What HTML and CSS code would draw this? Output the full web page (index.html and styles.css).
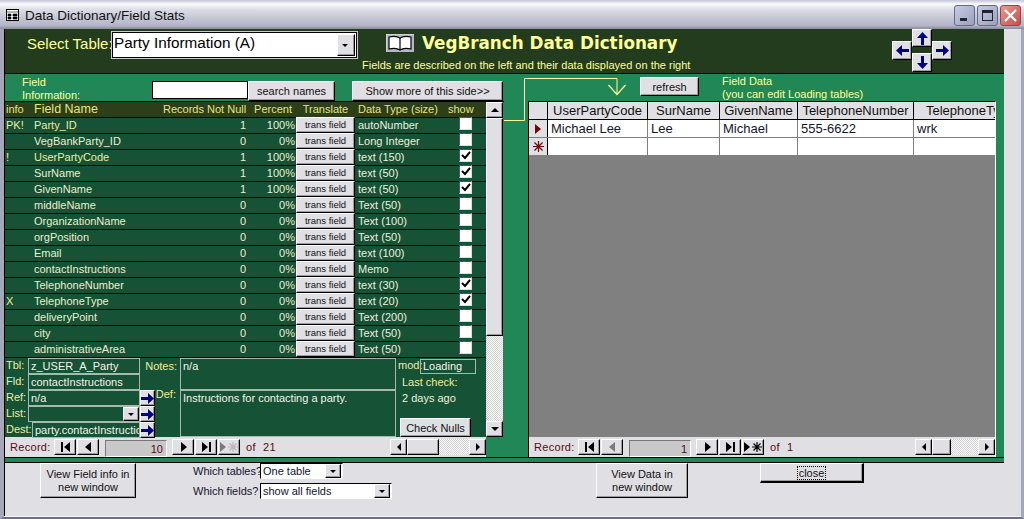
FILE: index.html
```html
<!DOCTYPE html>
<html lang="en">
<head>
    <meta charset="UTF-8">
    <meta name="viewport" content="width=device-width, initial-scale=1.0">
    <title>Data Dictionary/Field Stats</title>
    <link rel="stylesheet" href="styles.css">
</head>
<body>
    <svg class="sprite" width="0" height="0">
        <symbol id="blueRight" viewBox="0 0 13 11"><path d="M0 4h7V0l6 5.5-6 5.500V7H0z" fill="#000080"/></symbol>
        <symbol id="blueLeft" viewBox="0 0 13 11"><path d="M13 4H6V0L0 5.500l6 5.500V7h7z" fill="#000080"/></symbol>
        <symbol id="blueUp" viewBox="0 0 11 13"><path d="M4 13V6H0l5.500-6 5.500 6H7v7z" fill="#000080"/></symbol>
        <symbol id="blueDown" viewBox="0 0 11 13"><path d="M4 0v7H0l5.500 6 5.500-6H7V0z" fill="#000080"/></symbol>
        <symbol id="navFirst" viewBox="0 0 11 10"><path d="M1 0h2v10H1zM10 0v10L4 5z"/></symbol>
        <symbol id="navPrev" viewBox="0 0 11 10"><path d="M8 0v10L2 5z"/></symbol>
        <symbol id="navNext" viewBox="0 0 11 10"><path d="M3 0v10l6-5z"/></symbol>
        <symbol id="navLast" viewBox="0 0 11 10"><path d="M1 0v10l6-5zM8 0h2v10H8z"/></symbol>
        <symbol id="navNew" viewBox="0 0 20 10"><path d="M1 0v10l6-5z"/><path d="M14 0v10M9 5h10M10.500 1.500l7 7M17.500 1.500l-7 7" stroke="currentColor" stroke-width="1.200" fill="none"/></symbol>
        <symbol id="newStar" viewBox="0 0 11 11"><path d="M5.500 0v11M0 5.500h11M1.500 1.500l8 8M9.500 1.500l-8 8" stroke="#6a0a0a" stroke-width="1.200" fill="none"/></symbol>
        <symbol id="tick" viewBox="0 0 10 9"><path d="M1 4l3 3 5-6" fill="none" stroke="#000" stroke-width="2"/></symbol>
    </svg>

    <div class="window">
        <div class="titlebar">
            <svg class="title-icon" viewBox="0 0 13 12"><rect x=".5" y=".5" width="12" height="11" fill="#fff" stroke="#000"/><path d="M0 3h13M2 5h3v2H2zM7 5h4v2H7zM2 8h3v2H2zM7 8h4v2H7z" fill="#000" stroke="#000" stroke-width=".6"/></svg>
            <span class="title-text">Data Dictionary/Field Stats</span>
            <div class="win-buttons">
                <div class="win-btn"><span class="win-min"></span></div>
                <div class="win-btn"><span class="win-max"></span></div>
                <div class="win-btn win-close">
                    <svg viewBox="0 0 13 13" width="13" height="13"><path d="M1 1l11 11M12 1L1 12" stroke="#fff" stroke-width="2.200"/></svg>
                </div>
            </div>
        </div>

        <div class="client">
            <div class="form">
                <div class="form-head">
                    <span class="select-label">Select Table:</span>
                    <div class="combo combo-table">
                        <span class="combo-text">Party Information (A)</span>
                        <span class="combo-btn"></span>
                    </div>
                    <div class="head-title">
                        <div class="head-line">
                            <svg class="book" viewBox="0 0 28 18">
                                <rect width="28" height="18" fill="#b4b8c4"/>
                                <path d="M0 0h28M0 0v18" stroke="#e8e8f0" fill="none"/>
                                <path d="M3 3c4-1 8-1 11 1 3-2 7-2 11-1v12c-4-1-8-1-11 1-3-2-7-2-11-1z" fill="#fff" stroke="#000" stroke-width="1.200"/>
                                <path d="M14 4v12" stroke="#000" stroke-width="1.200"/>
                            </svg>
                            <h1 class="app-title">VegBranch Data Dictionary</h1>
                        </div>
                        <p class="head-sub">Fields are described on the left and their data displayed on the right</p>
                    </div>
                    <div class="arrow-pad">
                        <div class="pad-btn pad-up"><svg width="11" height="13"><use href="#blueUp"/></svg></div>
                        <div class="pad-btn pad-left"><svg width="13" height="11"><use href="#blueLeft"/></svg></div>
                        <div class="pad-btn pad-right"><svg width="13" height="11"><use href="#blueRight"/></svg></div>
                        <div class="pad-btn pad-down"><svg width="11" height="13"><use href="#blueDown"/></svg></div>
                    </div>
                </div>

                <div class="form-body">
                    <svg class="connector" width="130" height="50" viewBox="0 0 130 50">
                        <path d="M0 46.500h20.500V4.500h92.500V20" fill="none" stroke="#ffff99"/>
                        <path d="M104.500 11l8.500 9.500 8.500-9.500" fill="none" stroke="#ffff99" stroke-width="1.300"/>
                    </svg>

                    <section class="left-panel">
                        <div class="left-top">
                            <div class="field-info">Field<br>Information:</div>
                            <input class="search-box" type="text">
                            <button class="btn btn-search">search names</button>
                            <button class="btn btn-more">Show more of this side&gt;&gt;</button>
                        </div>

                        <div class="left-box">
                            <div class="left-main">
                                <div class="row row-head">
                                    <span>info</span>
                                    <span class="head-name">Field Name</span>
                                    <span class="num">Records Not Null</span>
                                    <span class="num">Percent</span>
                                    <span class="center">Translate</span>
                                    <span class="type">Data Type (size)</span>
                                    <span class="head-show">show</span>
                                </div>
                                <div class="row"><span class="mark">PK!</span><span class="hot">Party_ID</span><span class="num">1</span><span class="num">100%</span><button class="btn trans">trans field</button><span class="type">autoNumber</span><span class="check"></span></div>
                                <div class="row"><span class="mark"></span><span>VegBankParty_ID</span><span class="num">0</span><span class="num">0%</span><button class="btn trans">trans field</button><span class="type">Long Integer</span><span class="check"></span></div>
                                <div class="row"><span class="mark">!</span><span class="hot">UserPartyCode</span><span class="num">1</span><span class="num">100%</span><button class="btn trans">trans field</button><span class="type">text (150)</span><span class="check"><svg width="10" height="9"><use href="#tick"/></svg></span></div>
                                <div class="row"><span class="mark"></span><span>SurName</span><span class="num">1</span><span class="num">100%</span><button class="btn trans">trans field</button><span class="type">text (50)</span><span class="check"><svg width="10" height="9"><use href="#tick"/></svg></span></div>
                                <div class="row"><span class="mark"></span><span>GivenName</span><span class="num">1</span><span class="num">100%</span><button class="btn trans">trans field</button><span class="type">text (50)</span><span class="check"><svg width="10" height="9"><use href="#tick"/></svg></span></div>
                                <div class="row"><span class="mark"></span><span>middleName</span><span class="num">0</span><span class="num">0%</span><button class="btn trans">trans field</button><span class="type">Text (50)</span><span class="check"></span></div>
                                <div class="row"><span class="mark"></span><span>OrganizationName</span><span class="num">0</span><span class="num">0%</span><button class="btn trans">trans field</button><span class="type">Text (100)</span><span class="check"></span></div>
                                <div class="row"><span class="mark"></span><span>orgPosition</span><span class="num">0</span><span class="num">0%</span><button class="btn trans">trans field</button><span class="type">Text (50)</span><span class="check"></span></div>
                                <div class="row"><span class="mark"></span><span>Email</span><span class="num">0</span><span class="num">0%</span><button class="btn trans">trans field</button><span class="type">text (100)</span><span class="check"></span></div>
                                <div class="row"><span class="mark"></span><span>contactInstructions</span><span class="num">0</span><span class="num">0%</span><button class="btn trans">trans field</button><span class="type">Memo</span><span class="check"></span></div>
                                <div class="row"><span class="mark"></span><span>TelephoneNumber</span><span class="num">0</span><span class="num">0%</span><button class="btn trans">trans field</button><span class="type">text (30)</span><span class="check"><svg width="10" height="9"><use href="#tick"/></svg></span></div>
                                <div class="row"><span class="mark">X</span><span>TelephoneType</span><span class="num">0</span><span class="num">0%</span><button class="btn trans">trans field</button><span class="type">text (20)</span><span class="check"><svg width="10" height="9"><use href="#tick"/></svg></span></div>
                                <div class="row"><span class="mark"></span><span>deliveryPoint</span><span class="num">0</span><span class="num">0%</span><button class="btn trans">trans field</button><span class="type">Text (200)</span><span class="check"></span></div>
                                <div class="row"><span class="mark"></span><span>city</span><span class="num">0</span><span class="num">0%</span><button class="btn trans">trans field</button><span class="type">Text (50)</span><span class="check"></span></div>
                                <div class="row"><span class="mark"></span><span>administrativeArea</span><span class="num">0</span><span class="num">0%</span><button class="btn trans">trans field</button><span class="type">Text (50)</span><span class="check"></span></div>

                                <div class="detail">
                                    <div class="detail-left">
                                        <div class="d-line"><label>Tbl:</label><span class="d-box d-wide">z_USER_A_Party</span></div>
                                        <div class="d-line"><label>Fld:</label><span class="d-box d-wide">contactInstructions</span></div>
                                        <div class="d-line"><label>Ref:</label><span class="d-box d-wide">n/a</span><span class="go"><svg width="13" height="11"><use href="#blueRight"/></svg></span></div>
                                        <div class="d-line"><label>List:</label><span class="d-box d-wide d-combo"><span class="combo-btn"></span></span><span class="go"><svg width="13" height="11"><use href="#blueRight"/></svg></span></div>
                                        <div class="d-line"><label class="l-dest">Dest:</label><span class="d-box d-dest">party.contactInstructions</span><span class="go"><svg width="13" height="11"><use href="#blueRight"/></svg></span></div>
                                    </div>
                                    <div class="detail-mid">
                                        <div class="d-notes"><label>Notes:</label><span class="d-box">n/a</span></div>
                                        <div class="d-def"><label>Def:</label><span class="d-box">Instructions for contacting a party.</span></div>
                                    </div>
                                    <div class="detail-right">
                                        <div class="d-mod"><label>mod:</label><span class="d-box">Loading</span></div>
                                        <div class="d-check">Last check:</div>
                                        <div class="d-check">2 days ago</div>
                                        <button class="btn btn-nulls">Check Nulls</button>
                                    </div>
                                </div>
                            </div>
                            <div class="vscroll">
                                <span class="sb-btn"><i class="tri-up"></i></span>
                                <span class="sb-thumb"></span>
                                <span class="sb-track"></span>
                                <span class="sb-btn"><i class="tri-down"></i></span>
                            </div>
                        </div>

                        <div class="navbar navbar-left">
                            <span class="nav-label">Record:</span>
                            <span class="nav-btn"><svg width="11" height="10"><use href="#navFirst"/></svg></span>
                            <span class="nav-btn"><svg width="11" height="10"><use href="#navPrev"/></svg></span>
                            <span class="nav-num">10</span>
                            <span class="nav-btn"><svg width="11" height="10"><use href="#navNext"/></svg></span>
                            <span class="nav-btn"><svg width="11" height="10"><use href="#navLast"/></svg></span>
                            <span class="nav-btn off"><svg width="20" height="10"><use href="#navNew"/></svg></span>
                            <span class="nav-of">of&nbsp; 21</span>
                            <div class="hscroll hscroll-left">
                                <span class="sb-btn"><i class="tri-left"></i></span>
                                <span class="sb-thumb"></span>
                                <span class="sb-track"></span>
                                <span class="sb-btn"><i class="tri-right"></i></span>
                            </div>
                        </div>
                    </section>

                    <section class="right-panel">
                        <div class="right-top">
                            <button class="btn btn-refresh">refresh</button>
                            <div class="field-data">Field Data<br>(you can edit Loading tables)</div>
                        </div>
                        <div class="subform">
                            <div class="grid-row grid-head">
                                <span class="sel"></span><span>UserPartyCode</span><span>SurName</span><span>GivenName</span><span>TelephoneNumber</span><span class="clip">TelephoneType</span>
                            </div>
                            <div class="grid-row">
                                <span class="sel"><i class="rec-mark"></i></span><span>Michael Lee</span><span>Lee</span><span>Michael</span><span>555-6622</span><span>wrk</span>
                            </div>
                            <div class="grid-row">
                                <span class="sel"><svg width="11" height="11"><use href="#newStar"/></svg></span><span></span><span></span><span></span><span></span><span></span>
                            </div>
                            <div class="grid-empty"></div>
                            <div class="navbar navbar-right">
                                <span class="nav-label">Record:</span>
                                <span class="nav-btn"><svg width="11" height="10"><use href="#navFirst"/></svg></span>
                                <span class="nav-btn off"><svg width="11" height="10"><use href="#navPrev"/></svg></span>
                                <span class="nav-num">1</span>
                                <span class="nav-btn"><svg width="11" height="10"><use href="#navNext"/></svg></span>
                                <span class="nav-btn"><svg width="11" height="10"><use href="#navLast"/></svg></span>
                                <span class="nav-btn"><svg width="20" height="10"><use href="#navNew"/></svg></span>
                                <span class="nav-of">of&nbsp; 1</span>
                                <div class="hscroll hscroll-right">
                                    <span class="sb-btn"><i class="tri-left"></i></span>
                                    <span class="sb-thumb"></span>
                                    <span class="sb-track"></span>
                                    <span class="sb-btn"><i class="tri-right"></i></span>
                                </div>
                            </div>
                        </div>
                    </section>
                </div>
                <div class="form-band"></div>

                <div class="form-foot">
                    <button class="btn btn-view btn-view-field">View Field info in<br>new window</button>
                    <div class="which">
                        <div class="which-line"><span>Which tables?</span><div class="combo combo-small"><span class="combo-text">One table</span><span class="combo-btn"></span></div></div>
                        <div class="which-line"><span>Which fields?</span><div class="combo combo-fields"><span class="combo-text">show all fields</span><span class="combo-btn"></span></div></div>
                    </div>
                    <button class="btn btn-view btn-view-data">View Data in<br>new window</button>
                    <button class="btn btn-close"><span>close</span></button>
                </div>
            </div>
            <div class="side-strip"></div>
        </div>
    </div>
</body>
</html>
```

FILE: styles.css
```css
* {
    box-sizing: border-box;
}
html, body {
    margin: 0;
    height: 100%;
    overflow: hidden;
}
body {
    font-family: "Liberation Sans", Arial, sans-serif;
    font-size: 11px;
    color: #000;
    background: #e0dfe3;
}
.sprite {
    position: absolute;
}
button {
    font-family: inherit;
    margin: 0;
    padding: 0;
}
p, h1 {
    margin: 0;
}

/* window frame */
.window {
    width: 1024px;
    height: 519px;
    display: flex;
    flex-direction: column;
    background: #e0dfe3;
    border-left: 4px solid #a5a6b8;
    border-right: 3px solid #a5a6b8;
    border-bottom: 2px solid #6e6e86;
}
.titlebar {
    height: 29px;
    margin-left: -4px;
    margin-right: -3px;
    display: flex;
    align-items: center;
    padding: 1px 3px 0 6px;
    background: linear-gradient(#c4c5d6 0, #fbfbfd 14%, #dcdde6 32%, #c0c1d0 70%, #b3b4c6 88%, #8a8a9c 100%);
}
.title-icon {
    width: 13px;
    height: 12px;
}
.title-text {
    margin-left: 6px;
    font-size: 13.500px;
    color: #111;
}
.win-buttons {
    margin-left: auto;
    display: flex;
    gap: 2px;
}
.win-btn {
    width: 21px;
    height: 21px;
    border: 1px solid #5f6a8c;
    border-radius: 3px;
    background: linear-gradient(135deg, #c8cce0, #9ba0bc);
    display: flex;
    align-items: center;
    justify-content: center;
    position: relative;
}
.win-min {
    width: 7px;
    height: 3px;
    background: #223;
    margin-top: 9px;
    margin-right: 3px;
}
.win-max {
    width: 11px;
    height: 11px;
    border: 1px solid #223;
    border-top-width: 3px;
}
.win-close {
    background: linear-gradient(135deg, #e89a92, #c4504a);
    border-color: #8a4a4a;
}
.client {
    flex: 1;
    display: flex;
    min-height: 0;
    border-bottom: 1px solid #f5f4ea;
}
.form {
    width: 1000px;
    border-left: 1px solid #000;
    display: flex;
    flex-direction: column;
}
.side-strip {
    flex: 1;
    background: #e0dfe3;
}

/* classic raised button */
.btn, .pad-btn, .nav-btn, .sb-btn, .sb-thumb, .combo-btn, .go {
    background: #e0dfe3;
    border: 1px solid;
    border-color: #fff #000 #000 #fff;
    box-shadow: inset -1px -1px 0 #9d9da1;
}
.btn {
    font-size: 11px;
    color: #111;
}

/* top band */
.form-head {
    height: 45px;
    background: #233c1e;
    border-bottom: 1px solid #000;
    display: flex;
    align-items: flex-start;
    padding-left: 22px;
}
.select-label {
    width: 85px;
    margin-top: 6px;
    font-size: 15px;
    color: #ffff99;
    white-space: nowrap;
}
.combo {
    background: #fff;
    display: flex;
    align-items: center;
    justify-content: space-between;
    border: 1px solid;
    border-color: #777 #fff #fff #777;
}
.combo-btn {
    width: 16px;
    height: 14px;
    position: relative;
    flex: none;
    margin-right: 1px;
}
.combo-btn::after {
    content: "";
    position: absolute;
    left: 4px;
    top: 5px;
    border: 3px solid transparent;
    border-top: 3px solid #000;
    border-bottom: 0;
}
.combo-table {
    width: 245px;
    height: 26px;
    margin-top: 3px;
    border: 1px solid #000;
    outline: 1px solid #ccc;
    font-size: 15.300px;
}
.combo-table .combo-text {
    padding-left: 1px;
    padding-bottom: 4px;
}
.combo-table .combo-btn {
    width: 18px;
    height: 22px;
}
.combo-table .combo-btn::after {
    top: 9px;
}
.combo-text {
    padding-left: 2px;
    white-space: nowrap;
}
.head-title {
    margin-left: 5px;
    width: 350px;
}
.head-line {
    display: flex;
    align-items: center;
    margin-top: 4px;
    margin-left: 24px;
}
.book {
    width: 28px;
    height: 18px;
}
.app-title {
    margin-left: 8px;
    font-family: "DejaVu Sans", Verdana, sans-serif;
    font-size: 16.800px;
    font-weight: bold;
    line-height: 20px;
    color: #ffff99;
    white-space: nowrap;
}
.head-sub {
    margin-top: 6px;
    font-size: 11px;
    line-height: 13px;
    color: #ffff99;
    white-space: nowrap;
}
.arrow-pad {
    margin-left: 180px;
    display: grid;
    grid-template-columns: 20px 20px 20px;
    grid-template-rows: 12px 6px 6px 7px 12px;
}
.pad-btn {
    display: flex;
    align-items: center;
    justify-content: center;
}
.pad-up { grid-column: 2; grid-row: 1 / 3; }
.pad-left { grid-column: 1; grid-row: 2 / 5; }
.pad-right { grid-column: 3; grid-row: 2 / 5; }
.pad-down { grid-column: 2; grid-row: 4 / 6; }

/* green middle */
.form-body {
    position: relative;
    height: 383px;
    background: #218757;
    display: flex;
}
.form-band {
    height: 6px;
    background: #218757;
    border-top: 1px solid #000;
    border-bottom: 1px solid #000;
}
.connector {
    position: absolute;
    left: 499px;
    top: 0;
}
.left-panel {
    width: 499px;
    flex: none;
}
.left-top {
    height: 27px;
    display: flex;
    align-items: flex-start;
    position: relative;
}
.field-info {
    width: 147px;
    padding-left: 17px;
    padding-top: 2px;
    font-size: 11px;
    line-height: 13px;
    color: #ffff99;
}
.search-box {
    width: 96px;
    height: 18px;
    margin-top: 7px;
    border: 1px solid #000;
    background: #fff;
}
.btn-search {
    width: 87px;
    height: 20px;
    margin-top: 7px;
}
.btn-more {
    width: 151px;
    height: 20px;
    margin-top: 7px;
    margin-left: 17px;
}
.left-box {
    display: flex;
    height: 336px;
    border-top: 1px solid #000;
}
.left-main {
    width: 481px;
    flex: none;
    background: #155236;
}
.row {
    height: 16px;
    display: grid;
    grid-template-columns: 28px 129px 84px 49px 60px 102px 26px;
    align-items: start;
    border-bottom: 1px solid #000;
    color: #eeeecc;
    white-space: nowrap;
    font-size: 11px;
    line-height: 14px;
}
.row > span {
    padding-left: 1px;
}
.row-head {
    background: #2c3f1b;
    color: #e6e67a;
}
.head-name {
    font-size: 12.500px;
}
.hot, .mark {
    color: #eeee99;
}
.row .num {
    text-align: right;
    padding-right: 0;
}
.row-head .num {
    padding-right: 3px;
}
.row-head .center {
    text-align: center;
}
.row .type {
    padding-left: 3px;
    color: #f0f0dc;
}
.row-head .type {
    color: #e6e67a;
}
.row .head-show {
    margin-left: -10px;
}
.btn.trans {
    width: 59px;
    height: 16px;
    font-size: 9.500px;
    line-height: 12px;
    margin-left: 1px;
    margin-top: -1px;
}
.row > .check {
    width: 13px;
    height: 13px;
    padding: 0;
    margin-left: 2px;
    margin-top: -1px;
    background: #fff;
    border: 1px solid;
    border-color: #555 #ddd #ddd #555;
    display: flex;
    align-items: center;
    justify-content: center;
}

/* lower detail block */
.detail {
    display: flex;
    height: 79px;
    color: #eeee99;
    font-size: 11px;
}
.d-box {
    border: 1px solid #a8b8ae;
    color: #f4f4e8;
    padding-left: 2px;
    white-space: nowrap;
    overflow: hidden;
}
.detail-left {
    width: 150px;
    flex: none;
}
.d-line {
    height: 16px;
    display: flex;
    line-height: 14px;
}
.d-line label {
    width: 23px;
    padding-left: 1px;
}
.d-line .l-dest {
    width: 27px;
}
.d-wide {
    width: 112px;
}
.d-dest {
    width: 108px;
}
.d-combo {
    display: flex;
    justify-content: flex-end;
    padding: 0;
}
.d-combo .combo-btn {
    margin: 0;
}
.go {
    width: 15px;
    height: 16px;
    display: flex;
    align-items: center;
    justify-content: center;
}
.detail-mid {
    width: 241px;
    flex: none;
}
.d-notes, .d-def {
    display: flex;
    line-height: 14px;
}
.d-notes {
    height: 32px;
}
.d-def {
    height: 47px;
}
.d-notes label, .d-def label {
    width: 25px;
    padding-right: 3px;
    flex: none;
    white-space: nowrap;
    display: flex;
    justify-content: flex-end;
}
.d-notes label {
    padding-top: 1px;
}
.d-def label {
    margin-top: -3px;
    padding-right: 4px;
}
.d-notes .d-box, .d-def .d-box {
    flex: 1;
}
.detail-right {
    flex: 1;
    display: flex;
    flex-direction: column;
}
.d-mod {
    display: flex;
    padding-left: 2px;
    margin-top: 1px;
    height: 15px;
    line-height: 13px;
}
.d-mod label {
    width: 22px;
}
.d-mod .d-box {
    width: 56px;
}
.d-check {
    padding-left: 6px;
    height: 16px;
    line-height: 14px;
    margin-top: 1px;
    margin-bottom: -1px;
}
.d-check:nth-child(3) {
    color: #f0f0dc;
}
.btn-nulls {
    width: 71px;
    height: 19px;
    margin-top: 12px;
    margin-left: 4px;
}

/* scrollbars */
.vscroll, .hscroll {
    display: flex;
    flex: none;
}
.vscroll {
    width: 17px;
    flex-direction: column;
}
.sb-btn {
    width: 17px;
    height: 16px;
    flex: none;
    position: relative;
}
.sb-btn i {
    position: absolute;
    width: 0;
    height: 0;
    border-style: solid;
    border-color: transparent;
}
.vscroll .sb-btn i {
    left: 4px;
}
.tri-up {
    top: 5px;
    border-width: 0 4px 4px;
    border-bottom-color: #000 !important;
}
.tri-down {
    top: 5px;
    border-width: 4px 4px 0;
    border-top-color: #000 !important;
}
.tri-left, .tri-right {
    left: 6px;
    top: 3px;
}
.tri-left {
    border-width: 4px 4px 4px 0;
    border-right-color: #000 !important;
}
.tri-right {
    border-width: 4px 0 4px 4px;
    border-left-color: #000 !important;
}
.vscroll .sb-thumb {
    flex: none;
    height: 218px;
}
.sb-track {
    flex: 1;
    background: repeating-conic-gradient(#fff 0 25%, #d0d0d0 0 50%) 0 0 / 2px 2px;
}
.hscroll {
    height: 16px;
    margin-left: auto;
}
.hscroll .sb-thumb {
    flex: none;
}
.hscroll-left {
    width: 96px;
}
.hscroll-left .sb-thumb {
    width: 32px;
}
.hscroll-right {
    width: 80px;
}
.hscroll-right .sb-thumb {
    width: 19px;
}

/* record navigation */
.navbar {
    height: 20px;
    background: #e0dfe3;
    display: flex;
    align-items: center;
    color: #5a0a14;
    font-size: 11px;
}
.navbar-left {
    width: 481px;
}
.nav-label {
    padding-left: 5px;
    width: 49px;
    letter-spacing: .3px;
}
.nav-btn {
    width: 22px;
    height: 16px;
    margin-right: 1px;
    color: #000;
    display: flex;
    align-items: center;
    justify-content: center;
}
.nav-btn.off {
    color: #8a8a8a;
}
.nav-btn.off svg {
    opacity: .45;
}
.nav-num {
    width: 62px;
    height: 17px;
    margin: 2px 5px 0 5px;
    background: #c8c8c8;
    border: 1px solid;
    border-color: #777 #fff #fff #777;
    text-align: right;
    padding-right: 3px;
    line-height: 17px;
}
.nav-of {
    margin-left: 5px;
    letter-spacing: .4px;
}

/* right side */
.right-panel {
    margin-left: 24px;
    width: 468px;
    position: relative;
}
.right-top {
    height: 27px;
    display: flex;
    align-items: flex-start;
    padding-left: 112px;
}
.btn-refresh {
    width: 59px;
    height: 19px;
    margin-top: 3px;
}
.field-data {
    margin-left: 23px;
    margin-top: 1px;
    font-size: 11px;
    line-height: 13px;
    color: #ffff99;
    white-space: nowrap;
}
.subform {
    height: 356px;
    background: #808080;
    border-left: 1px solid #000;
    border-top: 1px solid #000;
    border-right: 1px solid #fff;
    display: flex;
    flex-direction: column;
}
.grid-row {
    height: 18px;
    display: grid;
    grid-template-columns: 19px 100px 72px 78px 116px 81px;
    background: #fff;
    border-bottom: 1px solid #808080;
    font-size: 13px;
    line-height: 18px;
    white-space: nowrap;
    color: #14142e;
}
.grid-row > span {
    border-right: 1px solid #808080;
    padding-left: 3px;
    overflow: hidden;
}
.grid-row > span:last-child {
    border-right: 0;
}
.grid-head {
    background: #e0dfe3;
    border-bottom: 1px solid #000;
    color: #111;
    line-height: 17px;
}
.grid-head > span {
    text-align: center;
    padding: 0;
    border-right: 1px solid #000;
}
.grid-head .clip {
    text-align: left;
    padding-left: 12px;
}
.grid-row .sel {
    background: #e0dfe3;
    border-right: 1px solid #000;
    padding: 0;
    display: flex;
    align-items: center;
    justify-content: center;
}
.rec-mark {
    width: 0;
    height: 0;
    border-left: 6px solid #6a0a0a;
    border-top: 5px solid transparent;
    border-bottom: 5px solid transparent;
}
.grid-empty {
    flex: 1;
    background: #808080;
}

/* bottom band */
.form-foot {
    flex: 1;
    display: flex;
    align-items: flex-start;
    padding-left: 35px;
    background: #e0dfe3;
}
.btn-view {
    height: 35px;
    line-height: 13px;
    padding: 0;
}
.btn-view-field {
    width: 96px;
}
.btn-view-data {
    width: 92px;
    margin-left: 100px;
}
.which {
    margin-left: 57px;
    margin-top: -2px;
    width: 303px;
    color: #14142e;
    font-size: 11px;
}
.which-line {
    display: flex;
    align-items: center;
    height: 20px;
    white-space: nowrap;
}
.which-line > span {
    width: 67px;
}
.combo-small, .combo-fields {
    height: 16px;
    border-color: #000 #fff #fff #000;
    font-size: 11px;
}
.combo-small {
    width: 83px;
}
.combo-fields {
    width: 132px;
}
.btn-close {
    width: 104px;
    height: 20px;
    margin-left: 72px;
    border-width: 1px 2px 2px 1px;
}
.btn-close span {
    border: 1px dotted #000;
    padding: 0 1px;
}
```
